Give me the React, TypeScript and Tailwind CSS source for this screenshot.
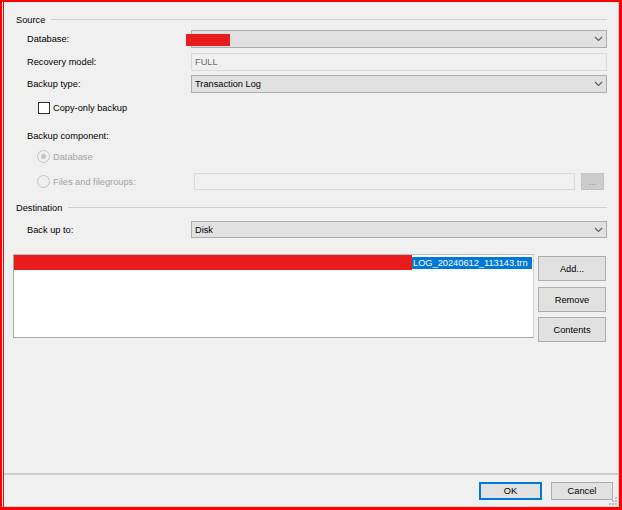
import React from "react";

function Chevron() {
  return (
    <svg width="9" height="6" viewBox="0 0 9 6" className="shrink-0">
      <path d="M1 1l3.5 3.5L8 1" fill="none" stroke="#5c5c5c" strokeWidth="1.1" />
    </svg>
  );
}

function Combo({ children, h = "h-[18px]" }: { children?: React.ReactNode; h?: string }) {
  return (
    <div className={`flex-1 ${h} bg-[#e1e1e1] border border-[#adadad] flex items-center justify-between pl-[3px] pr-[3px]`}>
      <span className="text-black">{children}</span>
      <Chevron />
    </div>
  );
}

function FieldRow({ label, children, h = "h-[18px]" }: { label: string; children: React.ReactNode; h?: string }) {
  return (
    <div className={`flex items-center ${h}`}>
      <div className="w-[178px] pl-[14px] shrink-0 text-black">{label}</div>
      {children}
    </div>
  );
}

function SectionHeader({ title }: { title: string }) {
  return (
    <div className="flex items-center h-[12px]">
      <span className="ml-[3px] text-black">{title}</span>
      <div className="flex-1 ml-[6px] h-[2px] border-t border-[#cfcfcf] border-b-white"></div>
    </div>
  );
}

function Radio({ checked }: { checked?: boolean }) {
  return (
    <div className="w-[13px] h-[13px] rounded-full border border-[#c2c2c2] bg-[#f0f0f0] flex items-center justify-center shrink-0">
      {checked && <div className="w-[5px] h-[5px] rounded-full bg-[#c2c2c2]"></div>}
    </div>
  );
}

function SideButton({ children }: { children: React.ReactNode }) {
  return (
    <div className="w-[68px] h-[25px] bg-[#e1e1e1] border border-[#adadad] flex items-center justify-center text-black">
      {children}
    </div>
  );
}

export default function App() {
  return (
    <div className="w-[622px] h-[510px] border-t-2 border-l-2 border-r-[3px] border-b-[3px] border-[#ff0000] [font-family:'Liberation_Sans',Arial,sans-serif] text-[9.25px] leading-[12px]">
      <div className="h-full border-l border-white">
        <div className="h-full border-l border-[#ff0000]">
          <div className="relative h-full bg-[#f0f0f0] border-r border-b border-r-[#cfcfcf] border-b-[#dcdcdc] flex flex-col">
            {/* form body */}
            <div className="flex-1 flex flex-col pl-[9px] pr-[11px] pt-[12px]">
              <SectionHeader title="Source" />

              <div className="mt-[4px] relative">
                <FieldRow label="Database:">
                  <Combo />
                </FieldRow>
                <div className="absolute left-[173px] top-[4px] w-[44px] h-[12px] bg-[#e81c1c]"></div>
              </div>

              <div className="mt-[5px]">
                <FieldRow label="Recovery model:">
                  <div className="flex-1 h-[18px] bg-[#f0f0f0] border border-[#d9d9d9] flex items-center pl-[3px] text-[#6d6d6d]">
                    FULL
                  </div>
                </FieldRow>
              </div>

              <div className="mt-[4px]">
                <FieldRow label="Backup type:">
                  <Combo>Transaction Log</Combo>
                </FieldRow>
              </div>

              <div className="mt-[9px] h-[12px] flex items-center pl-[25px]">
                <div className="w-[12px] h-[12px] border border-[#333] bg-white shrink-0"></div>
                <span className="ml-[3px] text-black">Copy-only backup</span>
              </div>

              <div className="mt-[16px] h-[12px] pl-[14px] text-black">Backup component:</div>

              <div className="mt-[8px] h-[13px] flex items-center pl-[24px]">
                <Radio checked />
                <span className="ml-[3px] text-[#a3a3a3]">Database</span>
              </div>

              <div className="mt-[10px] h-[17px] flex items-center">
                <div className="w-[181px] shrink-0 flex items-center pl-[24px]">
                  <Radio />
                  <span className="ml-[3px] text-[#a3a3a3]">Files and filegroups:</span>
                </div>
                <div className="w-[381px] h-[17px] bg-[#f0f0f0] border border-[#d9d9d9]"></div>
                <div className="ml-[6px] w-[23px] h-[17px] bg-[#cccccc] border border-[#c2c2c2] flex items-end justify-center pb-[3px] text-[#8c8c8c] leading-[8px]">
                  ...
                </div>
              </div>

              <div className="mt-[12px]">
                <SectionHeader title="Destination" />
              </div>

              <div className="mt-[7px]">
                <FieldRow label="Back up to:" h="h-[17px]">
                  <Combo h="h-[17px]">Disk</Combo>
                </FieldRow>
              </div>

              <div className="mt-[16px] flex">
                <div className="w-[521px] h-[84px] bg-white border border-[#a7a7a7] border-t-[#bdbdbd] border-r-[#cdcdcd]">
                  <div className="flex items-center h-[15px]">
                    <div className="w-[398px] h-[15px] bg-[#e81c1c]"></div>
                    <div className="w-[120px] h-[12px] bg-[#0078d7] text-white pl-[1px] flex items-center">
                      LOG_20240612_113143.trn
                    </div>
                  </div>
                </div>
                <div className="ml-[4px] pt-[2px] flex flex-col">
                  <SideButton>Add...</SideButton>
                  <div className="mt-[6px]">
                    <SideButton>Remove</SideButton>
                  </div>
                  <div className="mt-[5px]">
                    <SideButton>Contents</SideButton>
                  </div>
                </div>
              </div>
            </div>

            {/* button bar */}
            <div className="h-[33px] shrink-0 border-t-2 border-t-[#cdcdcd] flex items-start justify-end pt-[7px] pr-[5px]">
              <div className="w-[63px] h-[18px] bg-[#e1e1e1] border border-[#0078d7] shadow-[inset_0_0_0_1px_#0078d7] flex items-center justify-center text-black">
                OK
              </div>
              <div className="ml-[9px] w-[62px] h-[18px] bg-[#e1e1e1] border border-[#adadad] flex items-center justify-center text-black">
                Cancel
              </div>
            </div>

            {/* size grip */}
            <svg className="absolute right-[1px] bottom-[1px]" width="8" height="8" viewBox="0 0 8 8">
              <rect x="6" y="0" width="2" height="2" fill="#bdbdbd" />
              <rect x="3" y="3" width="2" height="2" fill="#bdbdbd" />
              <rect x="6" y="3" width="2" height="2" fill="#bdbdbd" />
              <rect x="0" y="6" width="2" height="2" fill="#bdbdbd" />
              <rect x="3" y="6" width="2" height="2" fill="#bdbdbd" />
              <rect x="6" y="6" width="2" height="2" fill="#bdbdbd" />
            </svg>
          </div>
        </div>
      </div>
    </div>
  );
}
